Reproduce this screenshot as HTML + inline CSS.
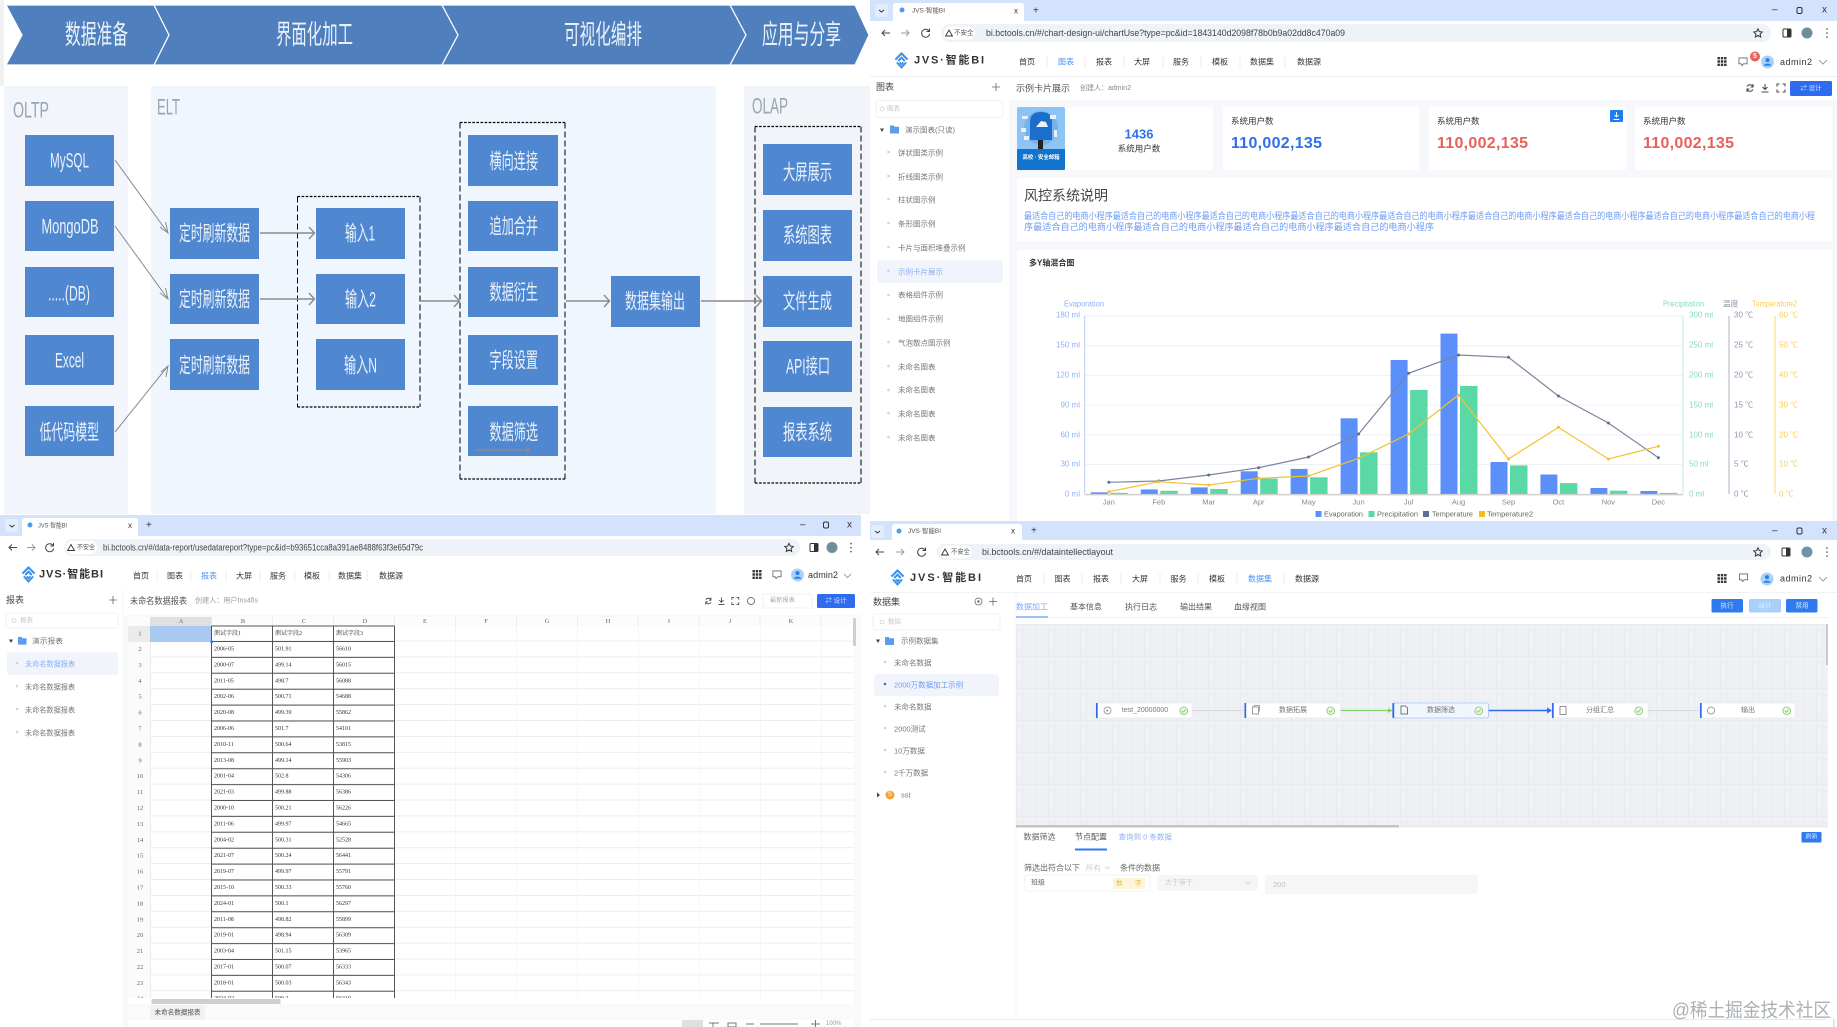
<!DOCTYPE html>
<html lang="zh"><head><meta charset="utf-8"><title>JVS 智能BI</title>
<style>
html,body{margin:0;padding:0;background:#fff;width:1837px;height:1027px;overflow:hidden}
svg{display:block;filter:blur(.35px)}
text{font-family:"Liberation Sans","Noto Sans CJK SC",sans-serif;dominant-baseline:central;white-space:pre}
.b{fill:#eaf1fb;font-size:21px;transform:translateY(1px)}
.nv{font-size:8px;fill:#333}
.nb{font-size:8px;fill:#4a90f0}
.it{font-size:7.5px;fill:#777}
.url{font-size:9px;fill:#444}
.tb{font-size:6.5px;fill:#555}
.ctl{font-size:10px;fill:#333}
.c{font-family:"Liberation Serif","Noto Serif CJK SC",serif;font-size:6px;fill:#333}
.r{font-family:"Liberation Serif",serif;font-size:6.5px;fill:#666;text-anchor:middle}
.ax1{font-size:8px;fill:#8fb2f5}
.ax2{font-size:8px;fill:#86dcbc}
.ax3{font-size:8px;fill:#8d97aa}
.ax4{font-size:8px;fill:#f6cf5e}
.mon{font-size:7.5px;fill:#888;text-anchor:middle}
.lg{font-size:7.5px;fill:#666}
.nt{font-size:7px;fill:#777;text-anchor:middle}
</style></head><body>
<svg width="1837" height="1027" viewBox="0 0 1837 1027" xmlns="http://www.w3.org/2000/svg">
<defs>
<symbol id="logo" viewBox="0 0 16 18"><path d="M1.5 8 8 1.5 14.5 8M4.5 9.5 8 6l3.5 3.5" fill="none" stroke="#3c90ea" stroke-width="2.2"/><path d="M3 11l5 5.5 5-5.5M6 11l2 2 2-2" fill="none" stroke="#3c90ea" stroke-width="2"/></symbol>
<symbol id="chk" viewBox="0 0 10 10"><circle cx="5" cy="5" r="4" fill="#eef9ea" stroke="#8ccb74" stroke-width="1"/><path d="M3 5l1.6 1.6L7.2 3.6" fill="none" stroke="#8ccb74" stroke-width="1"/></symbol>
<symbol id="grid9" viewBox="0 0 9 9"><path d="M0 0h2.4v2.4H0zM3.3 0h2.4v2.4H3.3zM6.6 0H9v2.4H6.6zM0 3.3h2.4v2.4H0zM3.3 3.3h2.4v2.4H3.3zM6.6 3.3H9v2.4H6.6zM0 6.6h2.4V9H0zM3.3 6.6h2.4V9H3.3zM6.6 6.6H9V9H6.6z" fill="#333"/></symbol>
<symbol id="tools" viewBox="0 0 46 10"><path d="M2 3.5a3.5 3.5 0 0 1 6 0M8 6.5a3.5 3.5 0 0 1-6 0M8 1v3H5.500M2 9V6h2.500" fill="none" stroke="#444" stroke-width="1"/><path d="M20 1v5M17.500 4 20 6.500 22.500 4M16.500 9h7" fill="none" stroke="#444" stroke-width="1"/><path d="M32 3.500V1h2.500M37.500 1H40v2.500M40 6.500V9h-2.500M34.500 9H32V6.500" fill="none" stroke="#444" stroke-width="1"/></symbol>
<symbol id="ava" viewBox="0 0 14 14"><circle cx="7" cy="7" r="7" fill="#a9d2fb"/><circle cx="7" cy="5" r="2.200" fill="#2b7fe8"/><path d="M3 11c.5-3 7.500-3 8 0z" fill="#2b7fe8"/></symbol>
<symbol id="msg" viewBox="0 0 11 11"><path d="M1 1h9v6.500H6L4.500 9.500 3.500 7.500H1z" fill="none" stroke="#666" stroke-width=".9"/></symbol>
<symbol id="fold" viewBox="0 0 10 9"><path d="M0 0h4l1 1.500h5V9H0z" fill="#5a9cf0"/></symbol>
<symbol id="star" viewBox="0 0 10 10"><path d="M5 .8l1.300 2.800 3 .4-2.200 2 .6 3L5 7.500 2.300 9l.6-3L.7 4l3-.4z" fill="none" stroke="#333" stroke-width="1"/></symbol>
<symbol id="warn" viewBox="0 0 8 8"><path d="M4 1 7.400 7H.6z" fill="none" stroke="#333" stroke-width=".9"/></symbol>
<pattern id="cg" x="150" y="625.600" width="61" height="15.900" patternUnits="userSpaceOnUse"><path d="M.5 0V15.900M0 15.400H61" fill="none" stroke="#ebecef" stroke-width="1"/></pattern>
<pattern id="dg" x="1016" y="624" width="6.400" height="6.400" patternUnits="userSpaceOnUse"><path d="M.5 0V6.400M0 .5H6.400" fill="none" stroke="#e9ebf0" stroke-width=".7"/></pattern>
<pattern id="dg2" x="1016" y="624" width="32" height="32" patternUnits="userSpaceOnUse"><path d="M.5 0V32M0 .5H32" fill="none" stroke="#e6e9ee" stroke-width="1"/></pattern>
<clipPath id="sheet"><rect x="128" y="617" width="726" height="381"/></clipPath>
</defs>
<rect width="1837" height="1027" fill="#fff"/>

<!-- ============ PANEL 1 ============ -->
<rect x="0" y="0" width="4" height="86" fill="#f1f1f1"/>
<rect x="4" y="86" width="124" height="428" fill="#f2f5fb"/>
<rect x="151" y="86" width="565" height="428" fill="#eff6fd"/>
<rect x="744" y="86" width="126" height="428" fill="#f1f4f9"/>
<g fill="#4f80bd" stroke="#fff" stroke-width="1.200">
<path d="M6 5H154L169 35 154 65H6L22 35Z"/>
<path d="M154 5H442L458 35 442 65H154L169 35Z"/>
<path d="M442 5H730L746 35 730 65H442L458 35Z"/>
<path d="M730 5H855L869 35 855 65H730L746 35Z"/>
</g>
<g fill="#eaf1fb" font-size="27">
<text x="65" y="35" font-size="27" textLength="63" lengthAdjust="spacingAndGlyphs" fill="#eaf1fb">数据准备</text>
<text x="276" y="35" font-size="27" textLength="77" lengthAdjust="spacingAndGlyphs" fill="#eaf1fb">界面化加工</text>
<text x="564" y="35" font-size="27" textLength="78" lengthAdjust="spacingAndGlyphs" fill="#eaf1fb">可视化编排</text>
<text x="762" y="35" font-size="27" textLength="79" lengthAdjust="spacingAndGlyphs" fill="#eaf1fb">应用与分享</text>
</g>
<g fill="#9aa5b1">
<text x="13" y="110" font-size="22" textLength="36" lengthAdjust="spacingAndGlyphs" fill="#9aa5b1">OLTP</text>
<text x="157" y="107" font-size="22" textLength="23" lengthAdjust="spacingAndGlyphs" fill="#9aa5b1">ELT</text>
<text x="752" y="106" font-size="22" textLength="36" lengthAdjust="spacingAndGlyphs" fill="#9aa5b1">OLAP</text>
</g>
<g fill="#4f88d0">
<rect x="25" y="135" width="89" height="51"/><rect x="25" y="201" width="89" height="50"/><rect x="25" y="267" width="89" height="50"/><rect x="25" y="335" width="89" height="50"/><rect x="25" y="406" width="89" height="50"/>
<rect x="170" y="208" width="89" height="51"/><rect x="170" y="274" width="89" height="50"/><rect x="170" y="339" width="89" height="51"/>
<rect x="316" y="208" width="89" height="51"/><rect x="316" y="274" width="89" height="50"/><rect x="316" y="339" width="89" height="51"/>
<rect x="468" y="135" width="90" height="51"/><rect x="468" y="201" width="90" height="50"/><rect x="468" y="267" width="90" height="50"/><rect x="468" y="335" width="90" height="50"/><rect x="468" y="406" width="90" height="50"/>
<rect x="611" y="276" width="89" height="51"/>
<rect x="763" y="144" width="89" height="51"/><rect x="763" y="210" width="89" height="51"/><rect x="763" y="276" width="89" height="51"/><rect x="763" y="341" width="89" height="51"/><rect x="763" y="407" width="89" height="50"/>
</g>
<text class="b" x="50" y="160" textLength="39" lengthAdjust="spacingAndGlyphs">MySQL</text>
<text class="b" x="41.500" y="226" textLength="57" lengthAdjust="spacingAndGlyphs">MongoDB</text>
<text class="b" x="48" y="293" textLength="42" lengthAdjust="spacingAndGlyphs">.....(DB)</text>
<text class="b" x="55" y="360" textLength="29" lengthAdjust="spacingAndGlyphs">Excel</text>
<text class="b" x="39.500" y="432" textLength="59.500" lengthAdjust="spacingAndGlyphs">低代码模型</text>
<text class="b" x="179" y="233" textLength="71" lengthAdjust="spacingAndGlyphs">定时刷新数据</text>
<text class="b" x="179" y="299" textLength="71" lengthAdjust="spacingAndGlyphs">定时刷新数据</text>
<text class="b" x="179" y="365" textLength="71" lengthAdjust="spacingAndGlyphs">定时刷新数据</text>
<text class="b" x="345" y="233" textLength="30" lengthAdjust="spacingAndGlyphs">输入1</text>
<text class="b" x="345" y="299" textLength="31" lengthAdjust="spacingAndGlyphs">输入2</text>
<text class="b" x="344" y="365" textLength="33" lengthAdjust="spacingAndGlyphs">输入N</text>
<text class="b" x="489.500" y="161" textLength="48.500" lengthAdjust="spacingAndGlyphs">横向连接</text>
<text class="b" x="489.500" y="226" textLength="48.500" lengthAdjust="spacingAndGlyphs">追加合并</text>
<text class="b" x="489.500" y="292" textLength="48.500" lengthAdjust="spacingAndGlyphs">数据衍生</text>
<text class="b" x="489.500" y="360" textLength="48.500" lengthAdjust="spacingAndGlyphs">字段设置</text>
<text class="b" x="489.500" y="432" textLength="48.500" lengthAdjust="spacingAndGlyphs">数据筛选</text>
<text class="b" x="625" y="301" textLength="60" lengthAdjust="spacingAndGlyphs">数据集输出</text>
<text class="b" x="783" y="172" textLength="49" lengthAdjust="spacingAndGlyphs">大屏展示</text>
<text class="b" x="783" y="235" textLength="49" lengthAdjust="spacingAndGlyphs">系统图表</text>
<text class="b" x="783" y="301" textLength="49" lengthAdjust="spacingAndGlyphs">文件生成</text>
<text class="b" x="786" y="366" textLength="44" lengthAdjust="spacingAndGlyphs">API接口</text>
<text class="b" x="783" y="432" textLength="49" lengthAdjust="spacingAndGlyphs">报表系统</text>
<g fill="none" stroke="#000" stroke-width="1">
<path d="M297.500 196.500H420M297.500 407H420M460 122.500H565M460 479H565M755 126.500H861M755 483H861" stroke-width="1.300" stroke-dasharray="2.600 1.500"/>
<path d="M297.500 196.500V407M420 196.500V407M460 122.500V479M565 122.500V479M755 126.500V483M861 126.500V483" stroke-dasharray="6 3"/>
</g>
<g fill="none" stroke="#8a8a8a" stroke-width="1">
<path d="M115 160 168 233M115 226 168 299M115 432 168 366"/>
<path d="M165.500 222 168 233 160 227M165.500 288 168 299 160 293M166 377 168 366 161 372"/>
<g stroke-width="1.400">
<path d="M260 233H314M309 227 314.500 233 309 239M260 299H314M309 293 314.500 299 309 305M420 301H459M454 295 459.500 301 454 307M566 301H609M604 295 609.500 301 604 307M701 301H761M756 295 761.500 301 756 307M476 450H529M526 447 530 450 526 453"/>
</g>
</g>

<!-- ============ PANEL 2 ============ -->
<rect x="870" y="0" width="967" height="521" fill="#f7f8fb"/>
<rect x="870" y="0" width="967" height="21" fill="#d3e3fd"/>
<rect x="870" y="21" width="967" height="24" fill="#fff"/>
<rect x="870" y="45" width="967" height="31" fill="#fff"/>
<rect x="870" y="76" width="967" height="1" fill="#eef0f3"/>
<path d="M893 21V6q0-3 3-3H1021q3 0 3 3V21z" fill="#fff"/>
<rect x="875" y="4" width="13" height="13" rx="3" fill="#e4edfb"/>
<path d="M879 10l2.500 2 2.500-2" fill="none" stroke="#333" stroke-width="1"/>
<circle cx="902" cy="10" r="2.500" fill="#4a9cf0"/>
<text class="tb" x="912" y="11" textLength="33" lengthAdjust="spacingAndGlyphs">JVS·智能BI</text>
<text class="tb" x="1014" y="11" font-size="8" style="font-size:8px;fill:#333">x</text>
<text class="ctl" x="1033" y="11">+</text>
<text class="ctl" x="1772" y="10">–</text>
<rect x="1797" y="7.500" width="5" height="6" rx="1.500" fill="none" stroke="#333" stroke-width="1"/>
<text class="ctl" x="1822" y="10">x</text>
<path d="M890 33h-8M885 30l-3 3 3 3" fill="none" stroke="#444" stroke-width="1"/>
<path d="M901 33h8M906 30l3 3-3 3" fill="none" stroke="#999" stroke-width="1"/>
<path d="M929 31a4 4 0 1 0 .6 3M929.500 28.500v3h-3" fill="none" stroke="#444" stroke-width="1"/>
<rect x="941" y="24" width="830" height="18" rx="9" fill="#eef2f9"/>
<rect x="944" y="26.500" width="31" height="13" rx="6.500" fill="#fff"/>
<use href="#warn" x="945" y="29" width="8" height="8"/>
<text x="954" y="33" style="font-size:6.500px;fill:#555">不安全</text>
<text class="url" x="986" y="33" textLength="359" lengthAdjust="spacingAndGlyphs">bi.bctools.cn/#/chart-design-ui/chartUse?type=pc&amp;id=1843140d2098f78b0b9a02dd8c470a09</text>
<use href="#star" x="1753" y="28" width="10" height="10"/>
<rect x="1783" y="29" width="8" height="8" rx="1" fill="none" stroke="#333" stroke-width="1"/><rect x="1787" y="29" width="4" height="8" fill="#333"/>
<circle cx="1807" cy="33" r="5.500" fill="#6d8f9a"/>
<path d="M1827 29v.1M1827 33v.1M1827 37v.1" stroke="#444" stroke-width="1.500" stroke-linecap="round"/>
<use href="#logo" x="894" y="52" width="15" height="17"/>
<text x="914" y="60.500" textLength="70" style="font-size:11px;fill:#333;font-weight:bold">JVS·智能BI</text>
<text class="nv" x="1019" y="62">首页</text><text class="nb" x="1058" y="62">图表</text><text class="nv" x="1096" y="62">报表</text><text class="nv" x="1134" y="62">大屏</text><text class="nv" x="1173" y="62">服务</text><text class="nv" x="1212" y="62">模板</text><text class="nv" x="1250" y="62">数据集</text><text class="nv" x="1297" y="62">数据源</text>
<path d="M1047 56v12M1085 56v12M1124 56v12M1163 56v12M1201 56v12M1240 56v12M1285 56v12" stroke="#eceef1"/>
<use href="#grid9" x="1717.500" y="57" width="9" height="9"/>
<use href="#msg" x="1738" y="57" width="10" height="10"/>
<circle cx="1755" cy="56.500" r="5" fill="#e8605b"/><text x="1755" y="56.500" text-anchor="middle" style="font-size:7px;fill:#fff;font-weight:bold">5</text>
<use href="#ava" x="1761" y="55" width="13" height="14"/>
<text x="1780" y="62" textLength="32" style="font-size:9px;fill:#333">admin2</text>
<path d="M1819 60l4 4 4-4" fill="none" stroke="#888" stroke-width=".8"/>

<rect x="870" y="77" width="139" height="444" fill="#fff"/>
<text x="876" y="87" style="font-size:9px;fill:#444">图表</text>
<path d="M992 87h8M996 83v8" stroke="#666" stroke-width=".8"/>
<rect x="876" y="100.500" width="127" height="17" rx="3" fill="#fff" stroke="#f0f1f4"/>
<circle cx="882" cy="109" r="2" fill="none" stroke="#ccc" stroke-width=".7"/>
<text x="887" y="109" style="font-size:6.500px;fill:#c4c7cc">图表</text>
<path d="M880 128.500h4l-2 3.500z" fill="#444"/>
<use href="#fold" x="890" y="125" width="9" height="9"/>
<text class="it" x="905" y="130">演示图表(只读)</text>
<rect x="877" y="260" width="126" height="23" rx="3" fill="#f1f4fa"/>
<g fill="#d0d3d8"><circle cx="888.500" cy="152" r="1.300"/><circle cx="888.500" cy="176" r="1.300"/><circle cx="888.500" cy="199" r="1.300"/><circle cx="888.500" cy="223" r="1.300"/><circle cx="888.500" cy="247" r="1.300"/><circle cx="888.500" cy="271" r="1.300"/><circle cx="888.500" cy="295" r="1.300"/><circle cx="888.500" cy="319" r="1.300"/><circle cx="888.500" cy="342" r="1.300"/><circle cx="888.500" cy="366" r="1.300"/><circle cx="888.500" cy="390" r="1.300"/><circle cx="888.500" cy="413" r="1.300"/><circle cx="888.500" cy="437" r="1.300"/></g>
<text class="it" x="898" y="153">饼状图类示例</text>
<text class="it" x="898" y="177">折线图类示例</text>
<text class="it" x="898" y="200">柱状图示例</text>
<text class="it" x="898" y="224">条形图示例</text>
<text class="it" x="898" y="248">卡片与面积堆叠示例</text>
<text class="it" x="898" y="272" style="fill:#8ab1f4">示例卡片展示</text>
<text class="it" x="898" y="295">表格组件示例</text>
<text class="it" x="898" y="319">地图组件示例</text>
<text class="it" x="898" y="343">气泡散点图示例</text>
<text class="it" x="898" y="367">未命名图表</text>
<text class="it" x="898" y="390">未命名图表</text>
<text class="it" x="898" y="414">未命名图表</text>
<text class="it" x="898" y="438">未命名图表</text>

<rect x="1009" y="77" width="828" height="23" fill="#fff"/>
<text x="1016" y="88.500" style="font-size:9px;fill:#555">示例卡片展示</text>
<text x="1080" y="88.500" style="font-size:7px;fill:#888">创建人：admin2</text>
<use href="#tools" x="1745" y="83" width="46" height="10"/>
<rect x="1790" y="81" width="42" height="15" rx="1.500" fill="#2e6bef"/>
<text x="1811" y="88.500" text-anchor="middle" style="font-size:6.500px;fill:#cfe0ff">⇄ 设计</text>

<g fill="#fff">
<rect x="1017" y="107" width="196" height="63" rx="2"/><rect x="1223" y="107" width="196" height="63" rx="2"/><rect x="1429" y="107" width="197" height="63" rx="2"/><rect x="1635" y="107" width="197" height="63" rx="2"/>
</g>
<rect x="1017" y="107" width="48" height="63" rx="2" fill="#8cc4f6"/>
<rect x="1017" y="149" width="48" height="21" rx="1" fill="#1273cf"/>
<circle cx="1041" cy="128" r="17" fill="#73b2ec"/>
<rect x="1038" y="138" width="5" height="11" fill="#222"/>
<path d="M1030 140v-18q0-10 11-10t11 10v18z" fill="#1b6ec9"/>
<path d="M1036 127l5-6 5 1 2 5z" fill="#e8f2fc"/>
<g fill="#e9f2fb"><rect x="1022" y="116" width="6" height="3"/><rect x="1050" y="115" width="6" height="4"/><rect x="1021" y="128" width="5" height="4"/><rect x="1054" y="130" width="3" height="7"/><rect x="1024" y="136" width="5" height="4"/></g>
<text x="1041" y="158" text-anchor="middle" textLength="37" lengthAdjust="spacingAndGlyphs" style="font-size:5.500px;fill:#fff;font-weight:bold">高校 · 安全邮箱</text>
<text x="1139" y="134" text-anchor="middle" style="font-size:13px;fill:#2f6fe8;font-weight:bold">1436</text>
<text x="1139" y="148.500" text-anchor="middle" style="font-size:8.500px;fill:#333">系统用户数</text>
<text x="1231" y="121" style="font-size:8.500px;fill:#333">系统用户数</text>
<text x="1231" y="143.500" textLength="91" style="font-size:16px;fill:#2f6fe8;font-weight:bold">110,002,135</text>
<text x="1437" y="121" style="font-size:8.500px;fill:#333">系统用户数</text>
<text x="1437" y="143.500" textLength="91" style="font-size:16px;fill:#e8605b;font-weight:bold">110,002,135</text>
<text x="1643" y="121" style="font-size:8.500px;fill:#333">系统用户数</text>
<text x="1643" y="143.500" textLength="91" style="font-size:16px;fill:#e8605b;font-weight:bold">110,002,135</text>
<rect x="1610" y="110" width="13" height="12" rx="1" fill="#1e7bf0"/>
<path d="M1616.500 112v5M1614.500 115l2 2 2-2M1613.500 119.500h6" fill="none" stroke="#fff" stroke-width=".9"/>

<rect x="1017" y="178" width="815" height="63" rx="2" fill="#fff"/>
<text x="1024" y="195.500" style="font-size:14px;fill:#444">风控系统说明</text>
<text x="1024" y="216" textLength="791" lengthAdjust="spacingAndGlyphs" style="font-size:9px;fill:#6d9af5">最适合自己的电商小程序最适合自己的电商小程序最适合自己的电商小程序最适合自己的电商小程序最适合自己的电商小程序最适合自己的电商小程序最适合自己的电商小程序最适合自己的电商小程序最适合自己的电商小程</text>
<text x="1024" y="227" textLength="410" lengthAdjust="spacingAndGlyphs" style="font-size:9px;fill:#6d9af5">序最适合自己的电商小程序最适合自己的电商小程序最适合自己的电商小程序最适合自己的电商小程序</text>

<rect x="1017" y="250" width="815" height="271" fill="#fff"/>
<text x="1029" y="263" style="font-size:8px;fill:#333;font-weight:bold">多Y轴混合图</text>
<path d="M1085 316H1683M1085 345.700H1683M1085 375.400H1683M1085 405.100H1683M1085 434.800H1683M1085 464.500H1683" stroke="#eef1f6" stroke-width="1"/>
<path d="M1084.700 316V494" stroke="#b6cdf8" stroke-width="1"/>
<path d="M1683 316V494" stroke="#bfeedd" stroke-width="1"/>
<path d="M1729 316V494" stroke="#aab3c4" stroke-width="1"/>
<path d="M1775 316V494" stroke="#f8d979" stroke-width="1"/>
<g fill="#5b8ff9">
<rect x="1090.800" y="492.300" width="17" height="2"/><rect x="1140.800" y="489.400" width="17" height="4.900"/><rect x="1190.700" y="487.400" width="17" height="6.900"/><rect x="1240.700" y="471.300" width="17" height="23"/><rect x="1290.600" y="468.900" width="17" height="25.400"/><rect x="1340.600" y="418.300" width="17" height="76"/><rect x="1390.600" y="360" width="17" height="134.300"/><rect x="1440.500" y="333.600" width="17" height="160.700"/><rect x="1490.500" y="462" width="17" height="32.300"/><rect x="1540.400" y="474.500" width="17" height="19.800"/><rect x="1590.400" y="488" width="17" height="6.300"/><rect x="1640.400" y="491" width="17" height="3.300"/>
</g>
<g fill="#5ad8a6">
<rect x="1110.300" y="492.800" width="17.500" height="1.500"/><rect x="1160.300" y="490.800" width="17.500" height="3.500"/><rect x="1210.200" y="489" width="17.500" height="5.300"/><rect x="1260.200" y="478.600" width="17.500" height="15.700"/><rect x="1310.100" y="477.300" width="17.500" height="17"/><rect x="1360.100" y="452.300" width="17.500" height="42"/><rect x="1410.100" y="389.900" width="17.500" height="104.400"/><rect x="1460" y="386" width="17.500" height="108.300"/><rect x="1510" y="465.400" width="17.500" height="28.900"/><rect x="1559.900" y="483.100" width="17.500" height="11.200"/><rect x="1609.900" y="490.700" width="17.500" height="3.600"/><rect x="1659.900" y="492.900" width="17.500" height="1.400"/>
</g>
<path d="M1085 494.600H1683" stroke="#cfcfcf" stroke-width="1.500"/>
<polyline points="1108.800,482.300 1158.800,481 1208.700,475 1258.700,467.700 1308.600,457 1358.600,434 1408.600,373.300 1458.500,355 1508.500,357.300 1558.400,396 1608.400,423 1658.400,457.700" fill="none" stroke="#79849e" stroke-width="1.200"/>
<polyline points="1108.800,491.700 1158.800,481.700 1208.700,485 1258.700,478.300 1308.600,476 1358.600,458.300 1408.600,434 1458.500,395 1508.500,459 1558.400,427.300 1608.400,459 1658.400,446.300" fill="none" stroke="#f2c230" stroke-width="1.200"/>
<g fill="#5d7092"><circle cx="1108.800" cy="482.300" r="1.500"/><circle cx="1158.800" cy="481" r="1.500"/><circle cx="1208.700" cy="475" r="1.500"/><circle cx="1258.700" cy="467.700" r="1.500"/><circle cx="1308.600" cy="457" r="1.500"/><circle cx="1358.600" cy="434" r="1.500"/><circle cx="1408.600" cy="373.300" r="1.500"/><circle cx="1458.500" cy="355" r="1.500"/><circle cx="1508.500" cy="357.300" r="1.500"/><circle cx="1558.400" cy="396" r="1.500"/><circle cx="1608.400" cy="423" r="1.500"/><circle cx="1658.400" cy="457.700" r="1.500"/></g>
<g fill="#f2c230"><circle cx="1108.800" cy="491.700" r="1.500"/><circle cx="1158.800" cy="481.700" r="1.500"/><circle cx="1208.700" cy="485" r="1.500"/><circle cx="1258.700" cy="478.300" r="1.500"/><circle cx="1308.600" cy="476" r="1.500"/><circle cx="1358.600" cy="458.300" r="1.500"/><circle cx="1408.600" cy="434" r="1.500"/><circle cx="1458.500" cy="395" r="1.500"/><circle cx="1508.500" cy="459" r="1.500"/><circle cx="1558.400" cy="427.300" r="1.500"/><circle cx="1608.400" cy="459" r="1.500"/><circle cx="1658.400" cy="446.300" r="1.500"/></g>
<text class="ax1" x="1064" y="304" textLength="40" lengthAdjust="spacingAndGlyphs">Evaporation</text>
<text class="ax2" x="1663" y="304" textLength="41" lengthAdjust="spacingAndGlyphs">Precipitation</text>
<text class="ax3" x="1722.500" y="304">温度</text>
<text class="ax4" x="1752" y="304" textLength="45" lengthAdjust="spacingAndGlyphs">Temperature2</text>
<g text-anchor="end">
<text class="ax1" x="1080" y="315" text-anchor="end">180 ml</text><text class="ax1" x="1080" y="345" text-anchor="end">150 ml</text><text class="ax1" x="1080" y="375" text-anchor="end">120 ml</text><text class="ax1" x="1080" y="405" text-anchor="end">90 ml</text><text class="ax1" x="1080" y="435" text-anchor="end">60 ml</text><text class="ax1" x="1080" y="464" text-anchor="end">30 ml</text><text class="ax1" x="1080" y="494" text-anchor="end">0 ml</text>
</g>
<text class="ax2" x="1689" y="315">300 ml</text><text class="ax2" x="1689" y="345">250 ml</text><text class="ax2" x="1689" y="375">200 ml</text><text class="ax2" x="1689" y="405">150 ml</text><text class="ax2" x="1689" y="435">100 ml</text><text class="ax2" x="1689" y="464">50 ml</text><text class="ax2" x="1689" y="494">0 ml</text>
<text class="ax3" x="1734" y="315">30 ℃</text><text class="ax3" x="1734" y="345">25 ℃</text><text class="ax3" x="1734" y="375">20 ℃</text><text class="ax3" x="1734" y="405">15 ℃</text><text class="ax3" x="1734" y="435">10 ℃</text><text class="ax3" x="1734" y="464">5 ℃</text><text class="ax3" x="1734" y="494">0 ℃</text>
<text class="ax4" x="1779" y="315">60 ℃</text><text class="ax4" x="1779" y="345">50 ℃</text><text class="ax4" x="1779" y="375">40 ℃</text><text class="ax4" x="1779" y="405">30 ℃</text><text class="ax4" x="1779" y="435">20 ℃</text><text class="ax4" x="1779" y="464">10 ℃</text><text class="ax4" x="1779" y="494">0 ℃</text>
<text class="mon" x="1108.800" y="502">Jan</text><text class="mon" x="1158.800" y="502">Feb</text><text class="mon" x="1208.700" y="502">Mar</text><text class="mon" x="1258.700" y="502">Apr</text><text class="mon" x="1308.600" y="502">May</text><text class="mon" x="1358.600" y="502">Jun</text><text class="mon" x="1408.600" y="502">Jul</text><text class="mon" x="1458.500" y="502">Aug</text><text class="mon" x="1508.500" y="502">Sep</text><text class="mon" x="1558.400" y="502">Oct</text><text class="mon" x="1608.400" y="502">Nov</text><text class="mon" x="1658.400" y="502">Dec</text>
<rect x="1315.500" y="511" width="6" height="6" fill="#5b8ff9"/><text class="lg" x="1324" y="514" textLength="39" lengthAdjust="spacingAndGlyphs">Evaporation</text>
<rect x="1368.500" y="511" width="6" height="6" fill="#5ad8a6"/><text class="lg" x="1377" y="514" textLength="41" lengthAdjust="spacingAndGlyphs">Precipitation</text>
<rect x="1423" y="511" width="6" height="6" fill="#5d7092"/><text class="lg" x="1432" y="514" textLength="41" lengthAdjust="spacingAndGlyphs">Temperature</text>
<rect x="1479" y="511" width="6" height="6" fill="#f6bd16"/><text class="lg" x="1487" y="514" textLength="46" lengthAdjust="spacingAndGlyphs">Temperature2</text>

<!-- ============ PANEL 3 ============ -->
<rect x="0" y="515" width="861" height="21" fill="#d3e3fd"/>
<rect x="0" y="536" width="861" height="23" fill="#fff"/>
<path d="M22 536V521q0-3 3-3H135q3 0 3 3V536z" fill="#fff"/>
<rect x="5" y="519" width="13" height="13" rx="3" fill="#e4edfb"/>
<path d="M9.500 525l2.500 2 2.500-2" fill="none" stroke="#333" stroke-width="1"/>
<circle cx="30" cy="525" r="2.500" fill="#4a9cf0"/>
<text class="tb" x="38" y="526" textLength="29" lengthAdjust="spacingAndGlyphs">JVS·智能BI</text>
<text x="128" y="525.500" style="font-size:8px;fill:#333">x</text>
<text class="ctl" x="146" y="525.500">+</text>
<text class="ctl" x="800" y="525">–</text>
<rect x="823.500" y="522" width="5" height="6" rx="1.500" fill="none" stroke="#333" stroke-width="1"/>
<text class="ctl" x="847" y="525">x</text>
<path d="M17 547.500H9M12 544.500l-3 3 3 3" fill="none" stroke="#444" stroke-width="1"/>
<path d="M27 547.500h8M32 544.500l3 3-3 3" fill="none" stroke="#999" stroke-width="1"/>
<path d="M53 545.500a4 4 0 1 0 .6 3M53.500 543v3h-3" fill="none" stroke="#444" stroke-width="1"/>
<rect x="64" y="539" width="736" height="17" rx="8.500" fill="#eef2f9"/>
<rect x="66" y="541" width="31" height="13" rx="6.500" fill="#fff"/>
<use href="#warn" x="67" y="543.500" width="8" height="8"/>
<text x="77" y="547.500" style="font-size:6.500px;fill:#555" textLength="18" lengthAdjust="spacingAndGlyphs">不安全</text>
<text class="url" x="103" y="547.500" textLength="320" lengthAdjust="spacingAndGlyphs">bi.bctools.cn/#/data-report/usedatareport?type=pc&amp;id=b93651cca8a391ae8488f63f3e65d79c</text>
<use href="#star" x="784" y="542.500" width="10" height="10"/>
<rect x="810" y="543.500" width="8" height="8" rx="1" fill="none" stroke="#333" stroke-width="1"/><rect x="814" y="543.500" width="4" height="8" fill="#333"/>
<circle cx="832" cy="547.500" r="5.500" fill="#6d8f9a"/>
<path d="M851 543.500v.1M851 547.500v.1M851 551.500v.1" stroke="#444" stroke-width="1.500" stroke-linecap="round"/>
<rect x="0" y="559" width="861" height="31" fill="#fff"/>
<use href="#logo" x="21" y="566" width="15" height="17"/>
<text x="39" y="574.500" textLength="64" style="font-size:11px;fill:#333;font-weight:bold">JVS·智能BI</text>
<text class="nv" x="133" y="576">首页</text><text class="nv" x="167" y="576">图表</text><text class="nb" x="201" y="576">报表</text><text class="nv" x="236" y="576">大屏</text><text class="nv" x="270" y="576">服务</text><text class="nv" x="304" y="576">模板</text><text class="nv" x="338" y="576">数据集</text><text class="nv" x="379" y="576">数据源</text>
<path d="M157 570v12M191 570v12M226 570v12M260 570v12M295 570v12M329 570v12M367 570v12" stroke="#eceef1"/>
<use href="#grid9" x="752.500" y="570" width="9" height="9"/>
<use href="#msg" x="772" y="570" width="10" height="10"/>
<use href="#ava" x="791" y="568" width="13" height="14"/>
<text x="808" y="575" textLength="30" style="font-size:9px;fill:#333">admin2</text>
<path d="M844 574l3.500 3.500 3.500-3.500" fill="none" stroke="#888" stroke-width=".8"/>

<rect x="0" y="590" width="122" height="437" fill="#fff"/>
<rect x="122" y="590" width="739" height="437" fill="#f8f9fb"/>
<text x="6" y="600" style="font-size:9px;fill:#444">报表</text>
<path d="M109 600h8M113 596v8" stroke="#666" stroke-width=".8"/>
<rect x="6" y="613" width="112" height="15" rx="3" fill="#fff" stroke="#f0f1f4"/>
<circle cx="14" cy="620.500" r="2" fill="none" stroke="#ccc" stroke-width=".7"/>
<text x="20" y="620.500" style="font-size:6.500px;fill:#c4c7cc">报表</text>
<path d="M9 639.500h4l-2 3.500z" fill="#444"/>
<use href="#fold" x="18" y="636.500" width="8.500" height="8.500"/>
<text class="it" x="32" y="641" textLength="31" lengthAdjust="spacingAndGlyphs">演示报表</text>
<rect x="7" y="652" width="111" height="23" rx="3" fill="#f1f4fa"/>
<g fill="#d0d3d8"><circle cx="17" cy="663" r="1.300"/><circle cx="17" cy="686" r="1.300"/><circle cx="17" cy="709" r="1.300"/><circle cx="17" cy="732" r="1.300"/></g>
<text class="it" x="25" y="664" style="fill:#8ab1f4" textLength="50" lengthAdjust="spacingAndGlyphs">未命名数据报表</text>
<text class="it" x="25" y="687" textLength="50" lengthAdjust="spacingAndGlyphs">未命名数据报表</text>
<text class="it" x="25" y="710" textLength="50" lengthAdjust="spacingAndGlyphs">未命名数据报表</text>
<text class="it" x="25" y="733" textLength="50" lengthAdjust="spacingAndGlyphs">未命名数据报表</text>

<rect x="124" y="590" width="737" height="25" fill="#fff"/>
<text x="130" y="601" textLength="57" lengthAdjust="spacingAndGlyphs" style="font-size:9px;fill:#555">未命名数据报表</text>
<text x="195" y="601" textLength="63" lengthAdjust="spacingAndGlyphs" style="font-size:7px;fill:#999">创建人：用户tns4fis</text>
<use href="#tools" x="704" y="596" width="40" height="10"/>
<circle cx="751" cy="601" r="3.500" fill="none" stroke="#555" stroke-width=".8"/>
<rect x="763" y="594" width="49" height="14" rx="1.500" fill="#fff" stroke="#f0f1f3"/>
<text x="770" y="601" style="font-size:6px;fill:#aaa" textLength="25" lengthAdjust="spacingAndGlyphs">最新报表</text>
<rect x="817" y="594" width="38" height="14" rx="1.500" fill="#2e6bef"/>
<text x="836" y="601" text-anchor="middle" style="font-size:6.500px;fill:#cfe0ff">⇄ 设计</text>

<rect x="128" y="617" width="726" height="391" fill="#fff"/>
<g clip-path="url(#sheet)">
<rect x="150" y="625.600" width="704" height="373" fill="url(#cg)"/>
<rect x="128" y="617" width="726" height="9" fill="#fcfcfc"/>
<rect x="128" y="626" width="22" height="373" fill="#fbfbfb"/>
<rect x="150" y="617" width="61.500" height="9" fill="#e0e0e0"/>
<rect x="128" y="626" width="22" height="16" fill="#ebebeb"/>
<rect x="150" y="626" width="61.500" height="16" fill="#a9c9f0"/>
<path d="M211.500 617V626M272.500 617V626M333.500 617V626M394.500 617V626M455.500 617V626M516.500 617V626M577.500 617V626M638 617V626M699 617V626M760 617V626M821 617V626" stroke="#eaeaea"/>
<path d="M211.500 626V1000M272.500 626V1000M333.500 626V1000M394.500 626V1000" stroke="#555" stroke-width="1"/>
<path d="M211.500 626H394.500M211.500 641.500H394.500M211.500 657.400H394.500M211.500 673.300H394.500M211.500 689.200H394.500M211.500 705.100H394.500M211.500 721H394.500M211.500 736.900H394.500M211.500 752.800H394.500M211.500 768.700H394.500M211.500 784.600H394.500M211.500 800.500H394.500M211.500 816.400H394.500M211.500 832.300H394.500M211.500 848.200H394.500M211.500 864.100H394.500M211.500 880H394.500M211.500 895.900H394.500M211.500 911.800H394.500M211.500 927.700H394.500M211.500 943.600H394.500M211.500 959.500H394.500M211.500 975.400H394.500M211.500 991.300H394.500" stroke="#555" stroke-width="1"/>
<rect x="210.500" y="640.500" width="2.500" height="2.500" fill="#2b7fe8"/>
<g class="cols">
<text class="r" x="181" y="621.500">A</text><text class="r" x="243" y="621.500">B</text><text class="r" x="304" y="621.500">C</text><text class="r" x="365" y="621.500">D</text><text class="r" x="425" y="621.500">E</text><text class="r" x="486" y="621.500">F</text><text class="r" x="547" y="621.500">G</text><text class="r" x="608" y="621.500">H</text><text class="r" x="669" y="621.500">I</text><text class="r" x="730" y="621.500">J</text><text class="r" x="791" y="621.500">K</text>
</g>
<text class="r" x="140" y="634">1</text><text class="r" x="140" y="649.500">2</text><text class="r" x="140" y="665.400">3</text><text class="r" x="140" y="681.300">4</text><text class="r" x="140" y="697.200">5</text><text class="r" x="140" y="713.100">6</text><text class="r" x="140" y="729">7</text><text class="r" x="140" y="744.900">8</text><text class="r" x="140" y="760.800">9</text><text class="r" x="140" y="776.700">10</text><text class="r" x="140" y="792.600">11</text><text class="r" x="140" y="808.500">12</text><text class="r" x="140" y="824.400">13</text><text class="r" x="140" y="840.300">14</text><text class="r" x="140" y="856.200">15</text><text class="r" x="140" y="872.100">16</text><text class="r" x="140" y="888">17</text><text class="r" x="140" y="903.900">18</text><text class="r" x="140" y="919.800">19</text><text class="r" x="140" y="935.700">20</text><text class="r" x="140" y="951.600">21</text><text class="r" x="140" y="967.500">22</text><text class="r" x="140" y="983.400">23</text><text class="r" x="140" y="999">24</text>
<text class="c" x="214" y="634">测试字段1</text><text class="c" x="275" y="634">测试字段2</text><text class="c" x="336" y="634">测试字段3</text>
<text class="c" x="214" y="649.500">2006-05</text><text class="c" x="275" y="649.500">501.91</text><text class="c" x="336" y="649.500">56610</text>
<text class="c" x="214" y="665.400">2000-07</text><text class="c" x="275" y="665.400">499.14</text><text class="c" x="336" y="665.400">56015</text>
<text class="c" x="214" y="681.300">2011-05</text><text class="c" x="275" y="681.300">498.7</text><text class="c" x="336" y="681.300">56088</text>
<text class="c" x="214" y="697.200">2002-06</text><text class="c" x="275" y="697.200">500.71</text><text class="c" x="336" y="697.200">54688</text>
<text class="c" x="214" y="713.100">2020-08</text><text class="c" x="275" y="713.100">499.39</text><text class="c" x="336" y="713.100">55862</text>
<text class="c" x="214" y="729">2006-06</text><text class="c" x="275" y="729">501.7</text><text class="c" x="336" y="729">54101</text>
<text class="c" x="214" y="744.900">2010-11</text><text class="c" x="275" y="744.900">500.64</text><text class="c" x="336" y="744.900">53815</text>
<text class="c" x="214" y="760.800">2013-08</text><text class="c" x="275" y="760.800">499.14</text><text class="c" x="336" y="760.800">55903</text>
<text class="c" x="214" y="776.700">2001-04</text><text class="c" x="275" y="776.700">502.8</text><text class="c" x="336" y="776.700">54306</text>
<text class="c" x="214" y="792.600">2021-03</text><text class="c" x="275" y="792.600">499.88</text><text class="c" x="336" y="792.600">56386</text>
<text class="c" x="214" y="808.500">2000-10</text><text class="c" x="275" y="808.500">500.21</text><text class="c" x="336" y="808.500">56226</text>
<text class="c" x="214" y="824.400">2011-06</text><text class="c" x="275" y="824.400">499.97</text><text class="c" x="336" y="824.400">54665</text>
<text class="c" x="214" y="840.300">2004-02</text><text class="c" x="275" y="840.300">500.31</text><text class="c" x="336" y="840.300">52528</text>
<text class="c" x="214" y="856.200">2021-07</text><text class="c" x="275" y="856.200">500.24</text><text class="c" x="336" y="856.200">56441</text>
<text class="c" x="214" y="872.100">2019-07</text><text class="c" x="275" y="872.100">499.97</text><text class="c" x="336" y="872.100">55791</text>
<text class="c" x="214" y="888">2015-10</text><text class="c" x="275" y="888">500.33</text><text class="c" x="336" y="888">55760</text>
<text class="c" x="214" y="903.900">2024-01</text><text class="c" x="275" y="903.900">500.1</text><text class="c" x="336" y="903.900">56297</text>
<text class="c" x="214" y="919.800">2011-08</text><text class="c" x="275" y="919.800">498.82</text><text class="c" x="336" y="919.800">55899</text>
<text class="c" x="214" y="935.700">2019-01</text><text class="c" x="275" y="935.700">498.94</text><text class="c" x="336" y="935.700">56309</text>
<text class="c" x="214" y="951.600">2003-04</text><text class="c" x="275" y="951.600">501.15</text><text class="c" x="336" y="951.600">53965</text>
<text class="c" x="214" y="967.500">2017-01</text><text class="c" x="275" y="967.500">500.07</text><text class="c" x="336" y="967.500">56333</text>
<text class="c" x="214" y="983.400">2018-01</text><text class="c" x="275" y="983.400">500.03</text><text class="c" x="336" y="983.400">56343</text>
<text class="c" x="214" y="999">2024-02</text><text class="c" x="275" y="999">500.2</text><text class="c" x="336" y="999">56310</text>
</g>
<rect x="151.500" y="999" width="129" height="5" rx="1" fill="#cfcfcf"/>
<rect x="853" y="618" width="3" height="28" rx="1" fill="#cfcfcf"/>
<rect x="128" y="1004" width="726" height="16" fill="#fafafa"/>
<rect x="150" y="1005" width="55" height="15" fill="#f1f1f1"/>
<text x="177.500" y="1013" text-anchor="middle" textLength="46" lengthAdjust="spacingAndGlyphs" style="font-size:7px;fill:#555">未命名数据报表</text>
<rect x="128" y="1020" width="726" height="7" fill="#fff"/>
<rect x="682" y="1020" width="21" height="7" fill="#e0e0e0"/>
<path d="M709 1023h10M713 1023v4M728 1023h8v4h-8zM746 1024h8M760 1024h38M778 1024h4M811 1024h9M815.500 1020v7" stroke="#777" stroke-width="1" fill="none"/>
<text x="826" y="1024" style="font-size:6px;fill:#999">100%</text>

<!-- ============ PANEL 4 ============ -->
<rect x="870" y="521" width="967" height="506" fill="#fff"/>
<rect x="870" y="521" width="967" height="19" fill="#d3e3fd"/>
<path d="M892 540V527q0-3 3-3H1019q3 0 3 3V540z" fill="#fff"/>
<rect x="871" y="525" width="13" height="13" rx="3" fill="#e4edfb"/>
<path d="M875 531l2.500 2 2.500-2" fill="none" stroke="#333" stroke-width="1"/>
<circle cx="899" cy="531" r="2.500" fill="#4a9cf0"/>
<text class="tb" x="908" y="531.500" textLength="33" lengthAdjust="spacingAndGlyphs">JVS·智能BI</text>
<text x="1011" y="531" style="font-size:8px;fill:#333">x</text>
<text class="ctl" x="1031" y="531">+</text>
<text class="ctl" x="1772" y="531">–</text>
<rect x="1797" y="528" width="5" height="6" rx="1.500" fill="none" stroke="#333" stroke-width="1"/>
<text class="ctl" x="1822" y="531">x</text>
<path d="M884 552h-8M879 549l-3 3 3 3" fill="none" stroke="#444" stroke-width="1"/>
<path d="M896 552h8M901 549l3 3-3 3" fill="none" stroke="#999" stroke-width="1"/>
<path d="M925 550a4 4 0 1 0 .6 3M925.500 547.500v3h-3" fill="none" stroke="#444" stroke-width="1"/>
<rect x="937" y="544" width="834" height="16" rx="8" fill="#eef2f9"/>
<rect x="940" y="545.500" width="32" height="13" rx="6.500" fill="#fff"/>
<use href="#warn" x="941" y="548" width="8" height="8"/>
<text x="951" y="552" style="font-size:6.500px;fill:#555" textLength="19" lengthAdjust="spacingAndGlyphs">不安全</text>
<text class="url" x="982" y="552" textLength="131" lengthAdjust="spacingAndGlyphs">bi.bctools.cn/#/dataintellectlayout</text>
<use href="#star" x="1753" y="547" width="10" height="10"/>
<rect x="1782" y="548" width="8" height="8" rx="1" fill="none" stroke="#333" stroke-width="1"/><rect x="1786" y="548" width="4" height="8" fill="#333"/>
<circle cx="1807" cy="552" r="5.500" fill="#6d95a8"/>
<path d="M1827 548v.1M1827 552v.1M1827 556v.1" stroke="#444" stroke-width="1.500" stroke-linecap="round"/>
<rect x="870" y="592" width="967" height="1" fill="#f1f2f5"/>
<use href="#logo" x="890" y="569" width="15" height="17"/>
<text x="910" y="578" textLength="71" style="font-size:11px;fill:#333;font-weight:bold">JVS·智能BI</text>
<text class="nv" x="1016" y="579">首页</text><text class="nv" x="1054.500" y="579">图表</text><text class="nv" x="1093" y="579">报表</text><text class="nv" x="1132" y="579">大屏</text><text class="nv" x="1170.500" y="579">服务</text><text class="nv" x="1209" y="579">模板</text><text class="nb" x="1248" y="579">数据集</text><text class="nv" x="1295" y="579">数据源</text>
<path d="M1044 573v12M1082 573v12M1121 573v12M1160 573v12M1198 573v12M1237 573v12M1284 573v12" stroke="#eceef1"/>
<use href="#grid9" x="1717.500" y="574" width="9" height="9"/>
<use href="#msg" x="1738.500" y="573" width="10" height="10"/>
<use href="#ava" x="1760.500" y="572" width="13" height="14"/>
<text x="1780" y="578.500" textLength="32" style="font-size:9px;fill:#333">admin2</text>
<path d="M1819 577l4 4 4-4" fill="none" stroke="#888" stroke-width=".8"/>

<text x="873" y="602" style="font-size:9px;fill:#444">数据集</text>
<circle cx="978.500" cy="601.500" r="3.500" fill="none" stroke="#666" stroke-width=".8"/><circle cx="978.500" cy="601.500" r="1.200" fill="#666"/>
<path d="M989 601.500h8M993 597.500v8" stroke="#666" stroke-width=".8"/>
<rect x="873" y="614" width="127" height="16" rx="3" fill="#fff" stroke="#f0f1f4"/>
<circle cx="882" cy="622" r="2" fill="none" stroke="#ccc" stroke-width=".7"/>
<text x="888" y="622" style="font-size:6.500px;fill:#c4c7cc">数据</text>
<path d="M876 639.500h4l-2 3.500z" fill="#444"/>
<use href="#fold" x="885" y="636.500" width="9" height="9"/>
<text class="it" x="901" y="641">示例数据集</text>
<rect x="874" y="674" width="125" height="22" rx="3" fill="#f1f4fa"/>
<g fill="#d0d3d8"><circle cx="885" cy="662" r="1.300"/><circle cx="885" cy="706" r="1.300"/><circle cx="885" cy="728" r="1.300"/><circle cx="885" cy="750" r="1.300"/><circle cx="885" cy="772" r="1.300"/></g>
<circle cx="885" cy="684" r="1.300" fill="#2e6bef"/>
<text class="it" x="894" y="663">未命名数据</text>
<text class="it" x="894" y="685" style="fill:#6d9af5">2000万数据加工示例</text>
<text class="it" x="894" y="707">未命名数据</text>
<text class="it" x="894" y="729">2000测试</text>
<text class="it" x="894" y="751">10万数据</text>
<text class="it" x="894" y="773">2千万数据</text>
<path d="M877 792.500v5l3-2.500z" fill="#444"/>
<circle cx="890" cy="795" r="4.500" fill="#f0a63c"/>
<text x="890" y="795" text-anchor="middle" style="font-size:6px;fill:#fff">S</text>
<text class="it" x="901" y="795">sst</text>
<path d="M1016 592V1019" stroke="#f3f4f6"/>

<text class="it" x="1016" y="607" style="font-size:8px;fill:#7fa8f5">数据加工</text>
<text class="it" x="1070" y="607" style="font-size:8px;fill:#555">基本信息</text>
<text class="it" x="1125" y="607" style="font-size:8px;fill:#555">执行日志</text>
<text class="it" x="1180" y="607" style="font-size:8px;fill:#555">输出结果</text>
<text class="it" x="1234" y="607" style="font-size:8px;fill:#555">血缘视图</text>
<path d="M1016 617.500H1830" stroke="#f0f1f4" stroke-width="1"/>
<rect x="1016" y="616" width="32" height="2" fill="#9fc0f8"/>
<rect x="1711.500" y="599" width="31.500" height="13.500" rx="1.500" fill="#2e7bef"/>
<rect x="1749" y="599" width="32" height="13.500" rx="1.500" fill="#a9d0fa"/>
<rect x="1786" y="599" width="31.500" height="13.500" rx="1.500" fill="#2e7bef"/>
<text x="1727" y="606" text-anchor="middle" style="font-size:6.500px;fill:#d8e6ff">执行</text>
<text x="1765" y="606" text-anchor="middle" style="font-size:6.500px;fill:#e3f0ff">设计</text>
<text x="1802" y="606" text-anchor="middle" style="font-size:6.500px;fill:#d8e6ff">禁用</text>

<rect x="1016" y="624" width="812" height="201" fill="#eff1f5"/>
<rect x="1016" y="624" width="812" height="201" fill="url(#dg)"/>
<rect x="1016" y="624" width="812" height="201" fill="url(#dg2)"/>
<rect x="1016" y="825" width="383" height="2.500" fill="#c4c4c4"/>
<rect x="1399" y="825" width="429" height="2.500" fill="#ededed"/>
<rect x="1826" y="624" width="2" height="41" fill="#c9c9c9"/>
<path d="M1192 710.500H1244" stroke="#cfd2d6" stroke-width=".8"/>
<path d="M1340 710.500H1392" stroke="#7ad36b" stroke-width="1.300"/><path d="M1388 708l4 2.500-4 2.500z" fill="#7ad36b"/>
<path d="M1488 710.500H1551" stroke="#2e6bef" stroke-width="1.600"/><path d="M1547 707.500l5 3-5 3z" fill="#2e6bef"/>
<path d="M1648 710.500H1699" stroke="#cfd2d6" stroke-width=".8"/>
<g fill="#fff" stroke="#e8eaee" stroke-width=".7">
<rect x="1096" y="703" width="96" height="15" rx="2"/><rect x="1244.500" y="703" width="96" height="15" rx="2"/><rect x="1552" y="703" width="96" height="15" rx="2"/><rect x="1700" y="703" width="95" height="15" rx="2"/>
</g>
<rect x="1392.500" y="703" width="96" height="15" rx="2" fill="#f0f5fe" stroke="#a7c5f7" stroke-width=".8"/>
<g fill="#2e6bef"><rect x="1096" y="703" width="1.700" height="15"/><rect x="1244.500" y="703" width="1.700" height="15"/><rect x="1392.500" y="703" width="1.700" height="15"/><rect x="1552" y="703" width="1.700" height="15"/><rect x="1700" y="703" width="1.700" height="15"/></g>
<circle cx="1107.500" cy="710.500" r="3.500" fill="none" stroke="#888" stroke-width=".8"/><path d="M1106.500 709l2 1.500-2 1.500z" fill="#888"/>
<rect x="1252.500" y="707" width="6" height="7" fill="none" stroke="#888" stroke-width=".8"/><path d="M1254 707v-1.500h5.500v6" fill="none" stroke="#888" stroke-width=".7"/>
<path d="M1401 706h4.500l2 2v6h-6.500z" fill="none" stroke="#555" stroke-width=".8"/>
<rect x="1560" y="706.500" width="6" height="8" fill="none" stroke="#777" stroke-width=".8"/>
<circle cx="1711" cy="710.500" r="3.500" fill="none" stroke="#888" stroke-width=".8"/>
<text class="nt" x="1145" y="710.500">test_20000000</text>
<text class="nt" x="1293" y="710.500">数据拓展</text>
<text class="nt" x="1441" y="710.500">数据筛选</text>
<text class="nt" x="1600" y="710.500">分组汇总</text>
<text class="nt" x="1748" y="710.500">输出</text>
<use href="#chk" x="1179" y="706" width="9.500" height="9.500"/>
<use href="#chk" x="1326" y="706" width="9.500" height="9.500"/>
<use href="#chk" x="1474" y="706" width="9.500" height="9.500"/>
<use href="#chk" x="1634" y="706" width="9.500" height="9.500"/>
<use href="#chk" x="1782" y="706" width="9.500" height="9.500"/>

<text x="1023.500" y="837" style="font-size:8px;fill:#666">数据筛选</text>
<text x="1075" y="837" style="font-size:8px;fill:#555">节点配置</text>
<text x="1118.500" y="837" style="font-size:7.500px;fill:#8ab1f4">查询到 0 条数据</text>
<rect x="1075" y="848.500" width="32" height="2" fill="#2e7bef"/>
<rect x="1801.500" y="832" width="20" height="10.500" rx="1" fill="#2e7bef"/>
<text x="1811.500" y="837.500" text-anchor="middle" style="font-size:6px;fill:#d8e6ff">刷新</text>
<text x="1024" y="868" style="font-size:8px;fill:#666">筛选出符合以下</text>
<text x="1086" y="868" style="font-size:7.500px;fill:#ccc">所有</text>
<path d="M1105 866.500l2.500 2.500 2.500-2.500" fill="none" stroke="#ccc" stroke-width=".7"/>
<text x="1120" y="868" style="font-size:8px;fill:#666">条件的数据</text>
<rect x="1025" y="875" width="125" height="16" rx="1.500" fill="#fff" stroke="#f1f2f4"/>
<text x="1031" y="883" style="font-size:7px;fill:#666">班级</text>
<rect x="1113" y="878" width="32" height="11" fill="#fdf5d8"/>
<text x="1116" y="883.500" style="font-size:6.500px;fill:#e5b948">数</text>
<text x="1135" y="883.500" style="font-size:6.500px;fill:#e5b948">字</text>
<rect x="1157" y="875" width="101" height="16" rx="4" fill="#f6f6f7"/>
<text x="1165" y="883" style="font-size:7px;fill:#ccc">大于等于</text>
<path d="M1245 881.500l3 3 3-3" fill="none" stroke="#ccc" stroke-width=".7"/>
<rect x="1265" y="875" width="213" height="19" rx="2" fill="#f6f6f7"/>
<text x="1273" y="884.500" style="font-size:7.500px;fill:#c2c2c2">200</text>
<path d="M870 1019.500H1826" stroke="#e9e9e9"/>
<rect x="1833" y="1019" width="1.500" height="8" fill="#ddd"/>
<text x="1672" y="1011" textLength="159" lengthAdjust="spacingAndGlyphs" style="font-size:19px;fill:#8e979c" fill-opacity=".75">@稀土掘金技术社区</text>
</svg>
</body></html>
